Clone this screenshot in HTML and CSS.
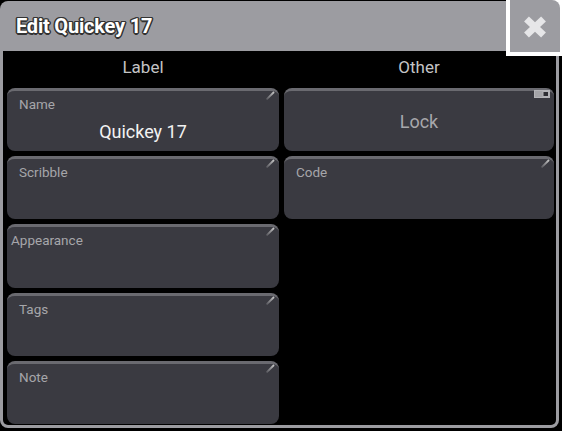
FILE: index.html
```html
<!DOCTYPE html>
<html>
<head>
<meta charset="utf-8">
<link rel="stylesheet" href="styles.css">
</head>
<body>
<div class="window">
  <div class="titlebar"><span class="title">Edit Quickey 17</span></div>
  <div class="content">
    <div class="colhead">Label</div>
    <div class="colhead">Other</div>

    <div class="card c1 r2">
      <div class="lbl">Name</div>
      <div class="value">Quickey 17</div>
      <svg class="pen" width="9" height="9" viewBox="0 0 9 9"><defs><linearGradient id="g1" x1="0" y1="1" x2="1" y2="0"><stop offset="0" stop-color="#55555b"/><stop offset="1" stop-color="#c8c8c8"/></linearGradient></defs><line x1="0.5" y1="8.5" x2="8" y2="1" stroke="url(#g1)" stroke-width="1.8"/></svg>
    </div>
    <div class="card c2 r2 center">
      <div class="lock">Lock</div>
      <svg class="toggle" width="16" height="8" viewBox="0 0 16 8"><rect x="0.5" y="0.5" width="15" height="7" fill="#a4a4a8" stroke="#b4b4b8"/><rect x="9" y="1.5" width="5.5" height="5" fill="#2e2e33" stroke="#b4b4b8" stroke-width="1"/></svg>
    </div>

    <div class="card c1 r3">
      <div class="lbl">Scribble</div>
      <svg class="pen" width="9" height="9" viewBox="0 0 9 9"><line x1="0.5" y1="8.5" x2="8" y2="1" stroke="url(#g1)" stroke-width="1.8"/></svg>
    </div>
    <div class="card c2 r3">
      <div class="lbl">Code</div>
      <svg class="pen" width="9" height="9" viewBox="0 0 9 9"><line x1="0.5" y1="8.5" x2="8" y2="1" stroke="url(#g1)" stroke-width="1.8"/></svg>
    </div>

    <div class="card c1 r4">
      <div class="lbl lbl-tight">Appearance</div>
      <svg class="pen" width="9" height="9" viewBox="0 0 9 9"><line x1="0.5" y1="8.5" x2="8" y2="1" stroke="url(#g1)" stroke-width="1.8"/></svg>
    </div>
    <div class="card c1 r5">
      <div class="lbl">Tags</div>
      <svg class="pen" width="9" height="9" viewBox="0 0 9 9"><line x1="0.5" y1="8.5" x2="8" y2="1" stroke="url(#g1)" stroke-width="1.8"/></svg>
    </div>
    <div class="card c1 r6">
      <div class="lbl">Note</div>
      <svg class="pen" width="9" height="9" viewBox="0 0 9 9"><line x1="0.5" y1="8.5" x2="8" y2="1" stroke="url(#g1)" stroke-width="1.8"/></svg>
    </div>
  </div>
  <div class="close">
    <div class="close-inner">
      <svg width="24" height="22" viewBox="0 0 24 22"><line x1="3.5" y1="3" x2="20.5" y2="19" stroke="#e6e6e8" stroke-width="7"/><line x1="20.5" y1="3" x2="3.5" y2="19" stroke="#e6e6e8" stroke-width="7"/></svg>
    </div>
  </div>
</div>
</body>
</html>
```

FILE: styles.css
```css
* { box-sizing: border-box; }
html, body { margin: 0; padding: 0; background: #000; }
body {
  width: 562px;
  height: 431px;
  overflow: hidden;
  font-family: Roboto, "Liberation Sans", sans-serif;
}
.window {
  position: relative;
  margin-top: 1px;
  width: 559px;
  height: 427px;
  background: #9c9ca1;
  border-radius: 8px;
  padding: 0 3px 3px 3px;
  display: flex;
  flex-direction: column;
}
.titlebar {
  height: 50px;
  flex: none;
  display: flex;
  align-items: center;
  padding-left: 13px;
}
.title {
  color: #ffffff;
  font-weight: bold;
  font-size: 20px;
  letter-spacing: -0.2px;
  margin-top: -1px;
  text-shadow:
    -1px -1px 0 #333, 1px -1px 0 #333, -1px 1px 0 #333, 1px 1px 0 #333,
    0 -1.5px 0 #333, 0 1.5px 0 #333, -1.5px 0 0 #333, 1.5px 0 0 #333;
}
.content {
  flex: 1;
  background: #000;
  border-radius: 0 0 5px 5px;
  display: grid;
  grid-template-columns: 272px 270px;
  grid-template-rows: 32px 63px 63px 64px 63px 63px;
  column-gap: 5px;
  row-gap: 5px;
  padding: 0 2px 1px 4px;
}
.colhead {
  color: #c4c4c6;
  font-size: 17px;
  display: flex;
  align-items: center;
  justify-content: center;
}
.card {
  position: relative;
  background: #3a3a41;
  border-top: 3px solid #6a6a70;
  border-radius: 8px;
  display: flex;
  flex-direction: column;
}
.c1 { grid-column: 1; }
.c2 { grid-column: 2; }
.r2 { grid-row: 2; }
.r3 { grid-row: 3; }
.r4 { grid-row: 4; }
.r5 { grid-row: 5; }
.r6 { grid-row: 6; }
.center { align-items: center; justify-content: center; }
.lbl {
  color: #a6a6aa;
  font-size: 13.5px;
  line-height: 15px;
  padding: 6px 0 0 12px;
}
.lbl-tight { padding-left: 4px; }
.value {
  color: #f2f2f2;
  font-size: 18px;
  text-align: center;
  margin-top: 9px;
}
.lock {
  color: #a8a8ac;
  font-size: 18px;
  margin-top: 1px;
}
.pen {
  position: absolute;
  top: 0px;
  right: 4px;
}
.toggle {
  position: absolute;
  top: -1px;
  right: 4px;
}
.close {
  position: absolute;
  top: -1px;
  left: 506px;
  width: 56px;
  height: 56px;
  background: #ffffff;
  padding: 0 2px 4px 4px;
}
.close-inner {
  width: 100%;
  height: 100%;
  background: #9c9ca1;
  border-radius: 0 8px 0 0;
  display: flex;
  align-items: center;
  justify-content: center;
  padding-top: 1px;
}
```
